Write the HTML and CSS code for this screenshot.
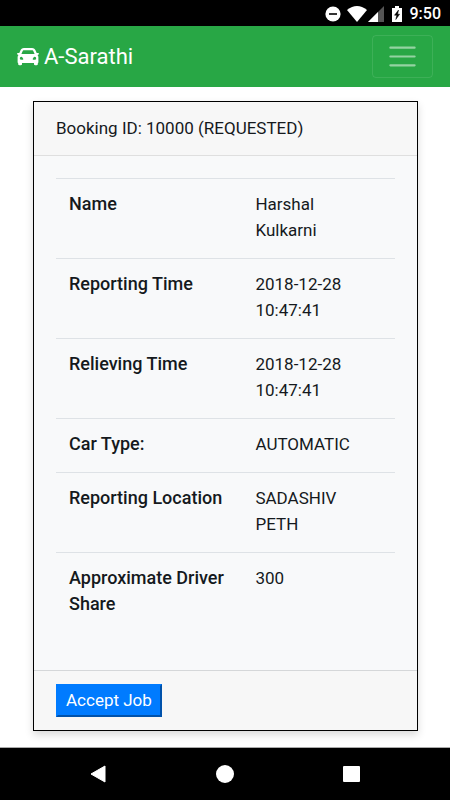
FILE: index.html
```html
<!DOCTYPE html>
<html lang="en">
<head>
    <meta charset="UTF-8">
    <meta name="viewport" content="width=device-width, initial-scale=1.0">
    <title>A-Sarathi</title>
    <link rel="stylesheet" href="styles.css">
</head>
<body>
    <div class="status-bar">
        <svg class="dnd" width="16" height="16" viewBox="0 0 16 16">
            <circle cx="8" cy="8" r="7.6" fill="#fff"/>
            <path d="M4 8h8" stroke="#000" stroke-width="1.6"/>
        </svg>
        <svg class="wifi" width="20" height="16" viewBox="0 0 20 16">
            <path d="M0 4Q10-4 20 4L10 16z" fill="#fff"/>
        </svg>
        <svg class="signal" width="16" height="16" viewBox="0 0 16 16">
            <path d="M16 0v16H0z" fill="#555"/>
            <path d="M10 6v10H0z" fill="#fff"/>
        </svg>
        <svg class="battery" width="10" height="16" viewBox="0 0 10 16">
            <path d="M3 0h4v2h3v14H0V2h3z" fill="#fff"/>
            <path d="M6.500 4L2.500 9.200h2.300L3.800 13.500L7.600 8.200H5.600z" fill="#000" stroke="#000" stroke-width=".5"/>
        </svg>
        <span>9:50</span>
    </div>

    <nav class="navbar">
        <a class="brand" href="#">
            <svg width="22" height="18" viewBox="0 0 22 18">
                <path fill="#fff" fill-rule="evenodd" d="M7 0h8c1.900 0 3 1 3.600 2.400L19.700 5H21.200c1 0 1 1.600 0 1.800l-.7.200c.6.600.9 1.300.9 2.200V14c0 .6-.2 1-.6 1.300V16.500c0 1.100-3.800 1.100-3.800 0V15H5V16.500c0 1.100-3.800 1.100-3.800 0V15.300C.800 15 .6 14.600.6 14V9.200c0-.9.300-1.600.9-2.200L.8 6.800C-.2 6.600-.2 5 .8 5H2.300L3.400 2.400C4 1 5.100 0 7 0zM7 2.300c-.8 0-1.200.4-1.500 1.100L4.400 6h13.200l-1.100-2.600c-.3-.7-.7-1.100-1.500-1.100zM4.300 8.800a1.500 1.500 0 1 0 0 3c.9 0 2 .1 2-.6S5.200 8.800 4.300 8.800zM17.700 8.800c-.9 0-2 1.700-2 2.400s1.100.6 2 .6a1.500 1.500 0 1 0 0-3z"/>
            </svg>
            A-Sarathi
        </a>
        <button class="menu-toggle" type="button" aria-label="Toggle navigation">
            <svg width="33" height="33" viewBox="0 0 30 30">
                <path d="M4 7h22M4 15h22M4 23h22" stroke="#fff" stroke-opacity=".5" stroke-width="2" stroke-linecap="round"/>
            </svg>
        </button>
    </nav>

    <main class="content">
        <div class="card">
            <div class="card-header">Booking ID: 10000 (REQUESTED)</div>
            <div class="card-body">
                <table class="booking-table">
                    <tbody>
                        <tr>
                            <th scope="row">Name</th>
                            <td>Harshal Kulkarni</td>
                        </tr>
                        <tr>
                            <th scope="row">Reporting Time</th>
                            <td>2018-12-28 10:47:41</td>
                        </tr>
                        <tr>
                            <th scope="row">Relieving Time</th>
                            <td>2018-12-28 10:47:41</td>
                        </tr>
                        <tr>
                            <th scope="row">Car Type:</th>
                            <td>AUTOMATIC</td>
                        </tr>
                        <tr>
                            <th scope="row">Reporting Location</th>
                            <td>SADASHIV PETH</td>
                        </tr>
                        <tr>
                            <th scope="row">Approximate Driver Share</th>
                            <td>300</td>
                        </tr>
                    </tbody>
                </table>
            </div>
            <div class="card-footer">
                <button class="accept" type="button">Accept Job</button>
            </div>
        </div>
    </main>

    <div class="system-nav">
        <svg width="18" height="18" viewBox="0 0 18 18">
            <path d="M2 9L16 1v16z" fill="#fff" stroke="#fff" stroke-width="1" stroke-linejoin="round"/>
        </svg>
        <svg width="18" height="18" viewBox="0 0 18 18">
            <circle cx="9" cy="9" r="9" fill="#fff"/>
        </svg>
        <svg width="18" height="18" viewBox="0 0 18 18">
            <rect y="1" width="17" height="16" rx="1" fill="#fff"/>
        </svg>
    </div>
</body>
</html>
```

FILE: styles.css
```css
* {
    box-sizing: border-box;
}
body {
    display: flex;
    flex-direction: column;
    min-height: 100vh;
    margin: 0;
    font-family: Roboto, sans-serif;
    font-size: 17px;
    line-height: 26px;
    color: #15191d;
    background-color: #fff;
}
svg {
    display: block;
}
.status-bar {
    display: flex;
    justify-content: flex-end;
    align-items: center;
    height: 26px;
    padding: 1px 9px 0;
    background-color: #000;
    color: #fff;
    font-size: 16px;
    font-weight: 500;
}
.dnd {
    margin-right: 6px;
}
.wifi {
    margin-right: 1px;
}
.signal {
    margin-right: 8px;
}
.battery {
    margin-right: 8px;
}
.navbar {
    display: flex;
    justify-content: space-between;
    align-items: center;
    padding: 9px 17px;
    background-color: #28a745;
}
.brand {
    display: flex;
    align-items: center;
    gap: 5px;
    color: #fff;
    font-size: 22px;
    text-decoration: none;
}
.menu-toggle {
    padding: 4px 13px;
    background: transparent;
    border: 1px solid rgba(255, 255, 255, 0.1);
    border-radius: 4px;
    cursor: pointer;
}
.content {
    flex: 1;
    padding: 14px 32px 16px 33px;
}
.card {
    border: 1px solid #000;
    background-color: #f8f9fa;
    box-shadow: 0 4px 8px rgba(0, 0, 0, 0.15);
}
.card-header {
    padding: 13px 22px 14px;
    background-color: #f7f7f7;
    border-bottom: 1px solid #dfdfdf;
}
.card-body {
    padding: 22px;
}
.booking-table {
    width: 100%;
    margin-bottom: 16px;
    border-collapse: collapse;
}
.booking-table th,
.booking-table td {
    padding: 12px 13px 15px;
    border-top: 1px solid #dee2e6;
    text-align: left;
    vertical-align: top;
}
.booking-table th {
    width: 55%;
    font-size: 18px;
    font-weight: 500;
}
.booking-table td {
    padding-right: 22px;
}
.card-footer {
    padding: 13px 22px;
    background-color: #f7f7f7;
    border-top: 1px solid #d5d7d9;
}
.accept {
    display: block;
    padding: 2px 8px;
    border: 2px outset #007bff;
    background-color: #007bff;
    color: #fff;
    font: inherit;
    line-height: 25px;
    cursor: pointer;
}
.system-nav {
    display: flex;
    justify-content: center;
    align-items: center;
    gap: 109px;
    height: 53px;
    border-top: 1px solid #aaa;
    background-color: #000;
}
```
